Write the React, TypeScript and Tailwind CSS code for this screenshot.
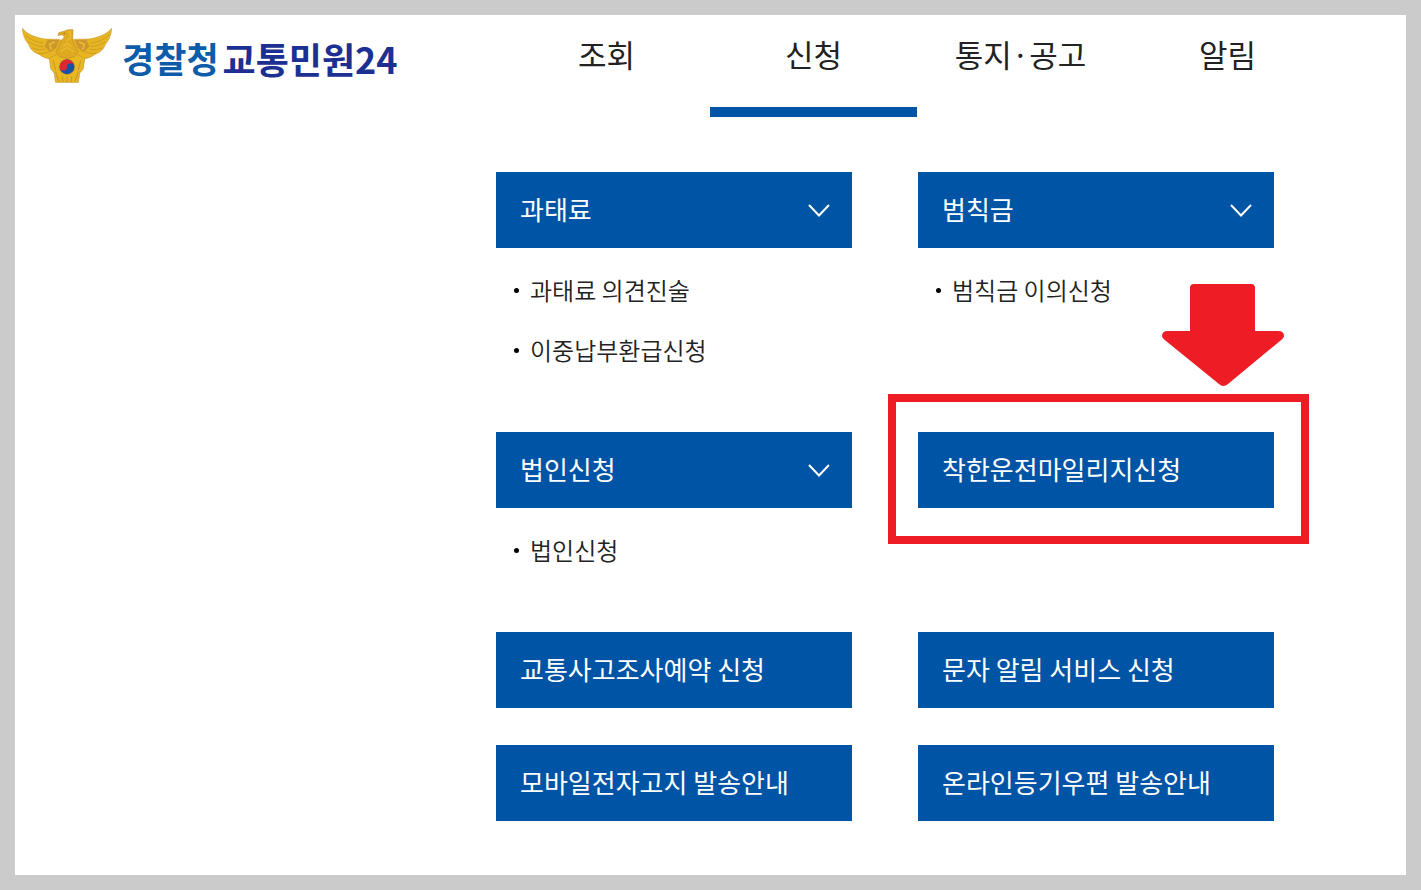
import { useState } from "react";

type MenuItem = {
  title: string;
  children?: string[];
  highlighted?: boolean;
};

const tabs = ["조회", "신청", "통지·공고", "알림"];

const menu: MenuItem[] = [
  { title: "과태료", children: ["과태료 의견진술", "이중납부환급신청"] },
  { title: "범칙금", children: ["범칙금 이의신청"] },
  { title: "법인신청", children: ["법인신청"] },
  { title: "착한운전마일리지신청", highlighted: true },
  { title: "교통사고조사예약 신청" },
  { title: "문자 알림 서비스 신청" },
  { title: "모바일전자고지 발송안내" },
  { title: "온라인등기우편 발송안내" },
];

function Emblem() {
  return (
    <svg viewBox="36 53 268 164" className="w-[90px] h-[55px] shrink-0" aria-hidden="true">
      {/* Wings */}
      <path
        d="M37 54 C50 72 78 82 104 86 L146 87 L170 96 L190 87 L236 86 C262 82 290 72 303 54 C302 74 295 90 284 102 C280 116 268 126 254 131 C244 139 232 144 219 145 L170 152 L121 145 C108 144 96 139 86 131 C72 126 60 116 56 102 C45 90 38 74 37 54 Z"
        fill="#e6b522"
        stroke="#cf9a2c"
        strokeWidth="2"
      />
      <g fill="none" stroke="#cd9722" strokeWidth="2.5" strokeLinecap="round">
        <path d="M46 75 C62 89 80 95 98 98" />
        <path d="M56 94 C70 104 84 108 98 108" />
        <path d="M66 112 C80 119 92 119 104 116" />
        <path d="M84 128 C96 131 108 129 118 122" />
        <path d="M294 75 C278 89 260 95 242 98" />
        <path d="M284 94 C270 104 256 108 242 108" />
        <path d="M274 112 C260 119 248 119 236 116" />
        <path d="M256 128 C244 131 232 129 222 122" />
      </g>
      <path d="M112 89 H147 L138 112 L121 125 L103 108 Z M228 89 H193 L202 112 L219 125 L237 108 Z" fill="#cb982e" />
      <path d="M134 94 L118 102 L124 118 M206 94 L222 102 L216 118" fill="none" stroke="#e9bb2c" strokeWidth="5" />
      {/* Tail */}
      <path
        d="M117 144 L146 128 L170 132 L194 128 L223 144 L218 176 L208 187 L204 215 L136 215 L132 187 L122 176 Z"
        fill="#e8b722"
        stroke="#cb942a"
        strokeWidth="2"
      />
      <path
        d="M129 150 L136 177 M211 150 L204 177 M136 184 L146 211 M204 184 L194 211 M156 198 L158 213 M170 200 V214 M184 198 L182 213"
        stroke="#c48f27"
        strokeWidth="2.5"
        strokeLinecap="round"
      />
      {/* Head and body */}
      <path
        d="M188 58 L174 58 L160 63 L146 67 L143 75 L155 73 L163 79 L153 90 L147 106 L137 123 L147 138 L170 144 L193 138 L203 123 L193 106 L187 88 Z"
        fill="#dfaa22"
        stroke="#c68f28"
        strokeWidth="2"
      />
      <path d="M171 66 L180 64 L180 83 L168 91 M157 108 L170 99 L183 108 M150 123 L170 111 L190 123" fill="none" stroke="#eabd2f" strokeWidth="4" />
      <circle cx="162" cy="69" r="2" fill="#8f6212" />
      {/* Taegeuk */}
      <circle cx="170" cy="169" r="24" fill="#c99b27" />
      <circle cx="170" cy="169" r="22" fill="#1652a5" />
      <path d="M148 169 A22 22 0 0 1 192 169 A11 11 0 0 0 170 169 A11 11 0 0 1 148 169 Z" fill="#e32531" />
    </svg>
  );
}

function Chevron() {
  return (
    <svg viewBox="0 0 22 13" className="w-[22px] h-[13px]" fill="none" aria-hidden="true">
      <path d="M1 1 L11 11.5 L21 1" stroke="white" strokeWidth="2" />
    </svg>
  );
}

/* Red frame and arrow that point at a menu entry */
function Callout() {
  return (
    <div className="pointer-events-none" aria-hidden="true">
      <div className="absolute -top-[38px] -bottom-[36px] -left-[30px] -right-[35px] border-8 border-[#ee1c25]" />
      <svg viewBox="0 0 122 102" className="absolute -top-[148px] -right-[10px] w-[122px] h-[102px]">
        <path
          d="M32 0 H89 Q93 0 93 4 V47 H116 Q122 47 122 52 Q122 54 118 57 L66 100 Q61 104 57 100 L4 57 Q0 54 0 52 Q0 47 6 47 H28 V4 Q28 0 32 0 Z"
          fill="#ee1c25"
        />
      </svg>
    </div>
  );
}

function MenuEntry({ item }: { item: MenuItem }) {
  const [isOpen, setIsOpen] = useState(true);

  if (!item.children) {
    return (
      <li className="relative self-start">
        <a href="#" className="flex items-center h-[76px] px-6 bg-[#0054a6] text-white text-[26px]">
          <span className="pb-1">{item.title}</span>
        </a>
        {item.highlighted && <Callout />}
      </li>
    );
  }

  return (
    <li>
      <button
        type="button"
        aria-expanded={isOpen}
        onClick={() => setIsOpen(!isOpen)}
        className="flex items-center justify-between w-full h-[76px] pl-6 pr-[22px] bg-[#0054a6] text-white text-[26px] cursor-pointer"
      >
        <span className="pb-1">{item.title}</span>
        <Chevron />
      </button>
      {isOpen && (
        <ul className="pt-3 pb-[15px] pl-[18px]">
          {item.children.map((child) => (
            <li key={child} className="flex items-center gap-[11px] h-[60px]">
              <span className="size-[5px] rounded-full bg-black" />
              <a href="#" className="text-2xl font-[350] text-[#222222]">
                {child}
              </a>
            </li>
          ))}
        </ul>
      )}
    </li>
  );
}

export default function App() {
  const [activeTab, setActiveTab] = useState("신청");

  return (
    <div className="min-h-screen bg-white border-[15px] border-[#cbcbcb] font-['Noto_Sans_CJK_KR',sans-serif] text-[#222222]">
      <header className="flex pr-[75px]">
        <a href="#" className="flex items-start gap-[10px] w-[488px] shrink-0 pl-[7px] pt-[13px]">
          <Emblem />
          <span className="flex gap-1 leading-[60px] font-bold text-[#1c3092] whitespace-nowrap">
            <span className="text-[35px] text-[#0c5ca9]">경찰청</span>
            <span className="text-[36px]">교통민원24</span>
          </span>
        </a>
        <nav className="grid grid-cols-4 flex-1">
          {tabs.map((tab) => (
            <a
              key={tab}
              href="#"
              onClick={() => setActiveTab(tab)}
              aria-current={tab === activeTab ? "page" : undefined}
              className={`flex justify-center h-[102px] pt-[15px] text-[31px] leading-[48px] border-b-10 ${
                tab === activeTab ? "border-[#0054a6]" : "border-transparent"
              }`}
            >
              {tab}
            </a>
          ))}
        </nav>
      </header>

      <main className="pt-[55px] pb-[54px] pl-[481px] pr-[132px]">
        <ul className="grid grid-cols-2 gap-x-[66px] gap-y-[37px]">
          {menu.map((item) => (
            <MenuEntry key={item.title} item={item} />
          ))}
        </ul>
      </main>
    </div>
  );
}
